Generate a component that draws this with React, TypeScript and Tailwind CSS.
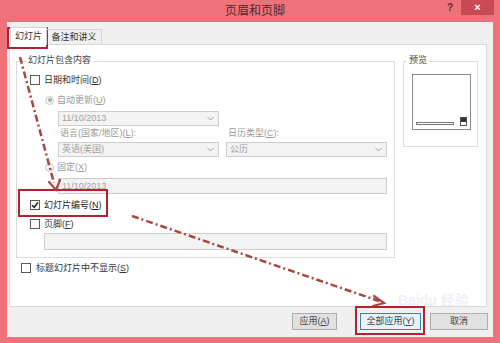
import type { ReactNode } from 'react';

const font = "font-['Liberation_Sans','Noto_Sans_CJK_SC',sans-serif]";

function Chevron() {
  return (
    <svg width="7" height="5" viewBox="0 0 7 5" className="shrink-0">
      <path d="M0.5 1 L3.5 4 L6.5 1" fill="none" stroke="#a0a0a0" strokeWidth="1" />
    </svg>
  );
}

function Check({ checked }: { checked?: boolean }) {
  return (
    <span className="flex h-[10px] w-[10px] shrink-0 items-center justify-center border border-[#5a5a5a] bg-white">
      {checked && (
        <svg width="8" height="8" viewBox="0 0 8 8">
          <path d="M1 4.2 L3.2 6.3 L7 1.5" fill="none" stroke="#222" strokeWidth="1.5" />
        </svg>
      )}
    </span>
  );
}

function Radio() {
  return (
    <span className="flex h-[9px] w-[9px] shrink-0 items-center justify-center rounded-full border border-[#c8c8c8] bg-[#f4f4f4]">
      <span className="h-[4px] w-[4px] rounded-full bg-[#a8a8a8]" />
    </span>
  );
}

function Select({ value, width, chevron = true }: { value: string; width: string; chevron?: boolean }) {
  return (
    <div className={`${width} flex h-full items-center justify-between border border-[#cdcdcd] bg-[#f3f3f3] pl-[3px] pr-[4px] text-[#a0a0a0]`}>
      <span>{value}</span>
      {chevron && <Chevron />}
    </div>
  );
}

function Button({ children, primary }: { children: ReactNode; primary?: boolean }) {
  return (
    <div
      className={`flex h-[17px] items-center justify-center border text-[#444] ${
        primary ? 'border-[#3c7fb1] bg-[#e5f1fb]' : 'border-[#adadad] bg-[#e1e1e1]'
      }`}
    >
      {children}
    </div>
  );
}

export default function App() {
  return (
    <div className={`${font} relative flex h-[343px] w-[500px] flex-col overflow-hidden bg-[#ef727a] text-[9px] leading-none`}>
      {/* title bar */}
      <div className="flex h-[22px] items-start">
        <div className="flex-1" />
        <div className="pl-[10px] pt-[5px] text-[12px] text-[#4a2b2d]">页眉和页脚</div>
        <div className="flex flex-1 items-start justify-end">
          <span className="mr-[8px] pt-[3px] text-[10px] font-bold text-[#5a2a2e]">?</span>
          <div className="mr-[6px] flex h-[15px] w-[33px] items-center justify-center bg-[#c94a52] text-[11px] font-bold text-white">
            ×
          </div>
        </div>
      </div>

      {/* window body */}
      <div className="mx-[7px] flex h-[315px] flex-col bg-[#f0f0f0]">
        {/* tabs */}
        <div className="relative z-10 flex h-[22px] items-end pl-[3px] pt-[5px]">
          <div className="-mb-px flex h-[18px] w-[37px] items-center justify-center border border-b-0 border-[#d4d4d4] bg-white text-[#333]">
            幻灯片
          </div>
          <div className="flex h-[15px] w-[55px] items-center justify-center border border-b-0 border-l-0 border-[#d4d4d4] text-[#333]">
            备注和讲义
          </div>
        </div>

        {/* panel */}
        <div className="ml-[2px] mr-[6px] flex h-[263px] flex-col border border-[#d9d9d9] bg-white">
          <div className="flex gap-[8px] pl-[6px] pt-[16px]">
            {/* group box */}
            <div className="relative flex h-[197px] w-[379px] flex-col border border-[#dcdcdc] pl-[13px]">
              <span className="absolute -top-[6px] left-[9px] bg-white px-[2px] text-[#444]">幻灯片包含内容</span>

              <div className="mt-[10px] flex h-[16px] items-center gap-[4px] text-[#333]">
                <Check />
                <span>日期和时间(<u>D</u>)</span>
              </div>

              <div className="mt-[4px] flex h-[16px] items-center gap-[3px] pl-[15px] text-[#999]">
                <Radio />
                <span>自动更新(<u>U</u>)</span>
              </div>

              <div className="mt-[3px] h-[15px] pl-[28px]">
                <Select value="11/10/2013" width="w-[161px]" />
              </div>

              <div className="mt-0 flex h-[14px] items-center pl-[30px] text-[#999]">
                <span className="w-[168px]">语言(国家/地区)(<u>L</u>):</span>
                <span>日历类型(<u>C</u>):</span>
              </div>

              <div className="mt-[2px] flex h-[15px] gap-[7px] pl-[28px]">
                <Select value="英语(美国)" width="w-[161px]" />
                <Select value="公历" width="w-[161px]" />
              </div>

              <div className="mt-[2px] flex h-[16px] items-center gap-[3px] pl-[15px] text-[#999]">
                <span className="h-[9px] w-[9px] shrink-0 rounded-full border border-[#c8c8c8] bg-[#f4f4f4]" />
                <span>固定(<u>X</u>)</span>
              </div>

              <div className="mt-[3px] h-[16px] pl-[28px]">
                <Select value="11/10/2013" width="w-[329px]" chevron={false} />
              </div>

              <div className="mt-[3px] flex h-[16px] items-center gap-[4px] text-[#222]">
                <Check checked />
                <span>幻灯片编号(<u>N</u>)</span>
              </div>

              <div className="mt-[3px] flex h-[16px] items-center gap-[4px] text-[#333]">
                <Check />
                <span>页脚(<u>F</u>)</span>
              </div>

              <div className="mt-[1px] h-[17px] pl-[14px]">
                <div className="h-full w-[343px] border border-[#cdcdcd] bg-[#f3f3f3]" />
              </div>
            </div>

            {/* preview */}
            <div className="relative h-[86px] w-[75px] border border-[#dcdcdc] pl-[8px] pt-[12px]">
              <span className="absolute -top-[6px] left-[3px] bg-white px-[2px] text-[#444]">预览</span>
              <div className="flex h-[56px] w-[59px] items-end justify-between border border-[#8a8a8a] bg-white px-[3px] pb-[3px]">
                <div className="mb-[1px] h-[3px] w-[38px] border border-[#777]" />
                <div className="flex h-[9px] w-[7px] flex-col border border-[#555]">
                  <div className="h-[4px] bg-[#333]" />
                </div>
              </div>
            </div>
          </div>

          <div className="mt-[2px] flex h-[16px] items-center gap-[5px] pl-[11px] text-[#333]">
            <Check />
            <span>标题幻灯片中不显示(<u>S</u>)</span>
          </div>
        </div>

        {/* buttons */}
        <div className="mt-[6px] flex justify-end pr-[5px]">
          <div className="w-[45px]">
            <Button>应用(<u>A</u>)</Button>
          </div>
          <div className="ml-[23px] w-[61px]">
            <Button primary>全部应用(<u>Y</u>)</Button>
          </div>
          <div className="ml-[9px] w-[58px]">
            <Button>取消</Button>
          </div>
        </div>
      </div>

      {/* annotation boxes */}
      <div className="pointer-events-none absolute left-[7px] top-[27px] h-[22px] w-[41px] border-2 border-[#b3222c]" />
      <div className="pointer-events-none absolute left-[18px] top-[189px] h-[28px] w-[90px] border-2 border-[#b3222c]" />
      <div className="pointer-events-none absolute left-[355px] top-[306px] h-[29px] w-[70px] border-2 border-[#b3222c]" />

      {/* watermark */}
      <div className="pointer-events-none absolute left-[398px] top-[293px] text-[14px] font-bold text-[#dfe3e9] opacity-50">
        Baidu 经验
      </div>

      {/* arrows */}
      <svg className="pointer-events-none absolute left-0 top-0" width="500" height="343" viewBox="0 0 500 343">
        <g stroke="#a8473d" strokeWidth="2.5" fill="none" strokeDasharray="7 3 2 3">
          <path d="M20 57 L54 183" />
          <path d="M132 216 L379 301" />
        </g>
        <g stroke="#a8473d" strokeWidth="2.2" fill="none" strokeLinecap="round">
          <path d="M49 182 L56 190 L60 180" />
          <path d="M374 296 L384 303 L373 306" />
        </g>
      </svg>
    </div>
  );
}
